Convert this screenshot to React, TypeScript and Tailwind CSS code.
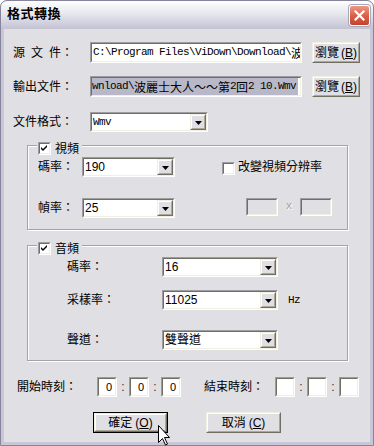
import React from "react";

const FONT = "font-['Liberation_Sans','Noto_Sans_CJK_TC',sans-serif]";

function Sunken({
  className = "",
  inner = "bg-white",
  children,
}: {
  className?: string;
  inner?: string;
  children?: React.ReactNode;
}) {
  return (
    <div className={`border border-t-[#9d9da1] border-l-[#9d9da1] border-r-white border-b-white ${className}`}>
      <div
        className={`h-full w-full border border-t-[#716f64] border-l-[#716f64] border-r-[#f1efe2] border-b-[#f1efe2] overflow-hidden flex items-center ${inner}`}
      >
        {children}
      </div>
    </div>
  );
}

function DropBtn() {
  return (
    <div className="h-full w-[16px] shrink-0 border border-t-[#f1efe2] border-l-[#f1efe2] border-r-[#716f64] border-b-[#716f64]">
      <div className="h-full w-full border border-t-white border-l-white border-r-[#aca899] border-b-[#aca899] bg-[#e0dfe3] flex items-center justify-center">
        <svg width="7" height="4" viewBox="0 0 7 4" className="mt-[1px]">
          <path d="M0 0H7L3.5 4Z" fill="black" />
        </svg>
      </div>
    </div>
  );
}

function Select({ className, value }: { className: string; value: string }) {
  return (
    <Sunken className={className}>
      <span className="flex-1 pl-[1px] text-[12px] leading-none whitespace-nowrap">{value}</span>
      <DropBtn />
    </Sunken>
  );
}

function Btn({
  className,
  children,
  def = false,
}: {
  className: string;
  children: React.ReactNode;
  def?: boolean;
}) {
  const raised = (
    <div className="h-full w-full border border-t-[#f1efe2] border-l-[#f1efe2] border-r-[#716f64] border-b-[#716f64]">
      <div className="h-full w-full border border-t-white border-l-white border-r-[#aca899] border-b-[#aca899] bg-[#e0dfe3] flex items-center justify-center text-[12px] leading-none whitespace-nowrap">
        {children}
      </div>
    </div>
  );
  if (def) {
    return <div className={`border border-black ${className}`}>{raised}</div>;
  }
  return <div className={className}>{raised}</div>;
}

function Check({ checked }: { checked: boolean }) {
  return (
    <Sunken className="w-[13px] h-[13px] shrink-0" inner="bg-white justify-center">
      {checked ? (
        <svg width="7" height="7" viewBox="0 0 7 7">
          <path d="M0 2L2 4L6 0V2L2 6L0 4Z" fill="black" />
        </svg>
      ) : null}
    </Sunken>
  );
}

function Mono({ text }: { text: string }) {
  return (
    <span className="flex items-center whitespace-pre leading-none">
      {[...text].map((c, i) =>
        c.charCodeAt(0) > 0x2e00 ? (
          <span key={i} className="inline-block w-[12px] text-[12px] font-['Noto_Sans_CJK_TC',sans-serif]">
            {c}
          </span>
        ) : (
          <span key={i} className="inline-block w-[6px] text-[11px] font-['Liberation_Mono',monospace]">
            {c}
          </span>
        )
      )}
    </span>
  );
}

function Legend({ label }: { label: string }) {
  return (
    <div className="absolute left-[9px] top-[-4px] flex items-center gap-[4px] bg-[#e0dfe3] pl-[1px] pr-[3px]">
      <Check checked={true} />
      <span className="text-[12px] leading-none">{label}</span>
    </div>
  );
}

function TimeBox({ v }: { v: string }) {
  return (
    <Sunken className="w-[20px] h-[20px] shrink-0" inner="bg-white justify-end pr-[3px]">
      <span className="text-[11px] leading-none">{v}</span>
    </Sunken>
  );
}

function Colon() {
  return <span className="w-[12px] text-center text-[12px] leading-none text-[#333]">:</span>;
}

export default function App() {
  return (
    <div className={`relative w-[374px] h-[446px] ${FONT} text-black`}>
      <div className="w-[374px] h-[446px] rounded-t-[7px] border border-[#85849a] bg-[#c8c7d8] flex flex-col overflow-hidden">
        {/* Title bar */}
        <div className="h-[28px] shrink-0 flex items-start justify-between rounded-t-[6px] bg-linear-to-b from-[#ffffff] via-[#e4e4ec] to-[#c3c2d3] pl-[6px] pr-[3px]">
          <span className="mt-[6px] text-[13px] font-bold leading-none tracking-[0.5px]">格式轉換</span>
          <div className="mt-[4px] w-[21px] h-[21px] rounded-[3px] border border-white bg-linear-to-b from-[#ea9a88] via-[#d8614b] to-[#c2432d] flex items-center justify-center shadow-[0_0_0_1px_#a9a8ba]">
            <svg width="11" height="11" viewBox="0 0 11 11">
              <path d="M1.5 1.5L9.5 9.5M9.5 1.5L1.5 9.5" stroke="white" strokeWidth="2.2" strokeLinecap="square" />
            </svg>
          </div>
        </div>

        {/* Body */}
        <div className="flex-1 mx-[3px] mb-[3px] bg-[#e0dfe3] flex flex-col pt-[13px]">
          {/* Row 1 */}
          <div className="flex items-center h-[21px]">
            <span className="pl-[9px] w-[86px] flex gap-[6px] text-[12px] leading-none">
              <span>源</span>
              <span>文</span>
              <span>件：</span>
            </span>
            <Sunken className="w-[212px] h-[21px] shrink-0" inner="bg-[#fffffb] pl-[1px]">
              <Mono text={"C:\\Program Files\\ViDown\\Download\\波"} />
            </Sunken>
            <Btn className="ml-[10px] w-[48px] h-[21px]">
              瀏覽<span className="ml-[2px]">(<span className="underline">B</span>)</span>
            </Btn>
          </div>

          {/* Row 2 */}
          <div className="flex items-center h-[21px] mt-[13px]">
            <span className="pl-[9px] w-[86px] text-[12px] leading-none">輸出文件：</span>
            <Sunken className="w-[212px] h-[21px] shrink-0" inner="bg-[#fffffb]">
              <span className="h-full flex items-center bg-[#b9b8c9] pr-[2px]">
                <Mono text={"wnload\\波麗士大人～～第2回2 10.Wmv"} />
              </span>
            </Sunken>
            <Btn className="ml-[10px] w-[48px] h-[21px]">
              瀏覽<span className="ml-[2px]">(<span className="underline">B</span>)</span>
            </Btn>
          </div>

          {/* Row 3 */}
          <div className="flex items-center h-[20px] mt-[15px]">
            <span className="pl-[9px] w-[86px] text-[12px] leading-none">文件格式：</span>
            <Sunken className="w-[118px] h-[20px]">
              <span className="flex-1 pl-[1px]">
                <Mono text="Wmv" />
              </span>
              <DropBtn />
            </Sunken>
          </div>

          {/* Video group */}
          <div className="relative mt-[13px] ml-[23px] w-[321px] h-[85px] shrink-0 border border-[#a3a3a8] shadow-[inset_1px_1px_0_#fff,1px_1px_0_#fff] pt-[11px] pl-[10px]">
            <Legend label="視頻" />
            <div className="flex items-center h-[20px]">
              <span className="w-[44px] text-[12px] leading-none">碼率：</span>
              <Select className="w-[93px] h-[20px]" value="190" />
              <div className="ml-[47px] mt-[3px]">
                <Check checked={false} />
              </div>
              <span className="ml-[3px] text-[12px] leading-none">改變視頻分辨率</span>
            </div>
            <div className="flex items-center h-[20px] mt-[21px]">
              <span className="w-[44px] text-[12px] leading-none">幀率：</span>
              <Select className="w-[93px] h-[20px]" value="25" />
              <Sunken className="ml-[71px] mb-[3px] w-[32px] h-[18px]" inner="bg-[#e0dfe3]" />
              <span className="w-[22px] mb-[3px] text-center text-[11px] leading-none text-[#a2a2a6] [text-shadow:1px_1px_0_#fff] font-['Liberation_Mono',monospace]">
                x
              </span>
              <Sunken className="mb-[3px] w-[32px] h-[18px]" inner="bg-[#e0dfe3]" />
            </div>
          </div>

          {/* Audio group */}
          <div className="relative mt-[15px] ml-[23px] w-[321px] h-[116px] shrink-0 border border-[#a3a3a8] shadow-[inset_1px_1px_0_#fff,1px_1px_0_#fff] pt-[11px] pl-[39px]">
            <Legend label="音頻" />
            <div className="flex items-center h-[20px]">
              <span className="w-[95px] text-[12px] leading-none">碼率：</span>
              <Select className="w-[116px] h-[20px]" value="16" />
            </div>
            <div className="flex items-center h-[20px] mt-[13px]">
              <span className="w-[95px] text-[12px] leading-none">采樣率：</span>
              <Select className="w-[116px] h-[20px]" value="11025" />
              <span className="ml-[10px]">
                <Mono text="Hz" />
              </span>
            </div>
            <div className="flex items-center h-[20px] mt-[20px]">
              <span className="w-[95px] text-[12px] leading-none">聲道：</span>
              <Select className="w-[116px] h-[20px]" value="雙聲道" />
            </div>
          </div>

          {/* Time row */}
          <div className="flex items-center h-[20px] mt-[16px] pl-[13px]">
            <span className="w-[80px] text-[12px] leading-none">開始時刻：</span>
            <TimeBox v="0" />
            <Colon />
            <TimeBox v="0" />
            <Colon />
            <TimeBox v="0" />
            <span className="ml-[23px] w-[71px] text-[12px] leading-none">結束時刻：</span>
            <TimeBox v="" />
            <Colon />
            <TimeBox v="" />
            <Colon />
            <TimeBox v="" />
          </div>

          {/* Buttons */}
          <div className="flex items-center mt-[15px] pl-[89px]">
            <Btn className="w-[75px] h-[21px]" def={true}>
              確定<span className="ml-[3px]">(<span className="underline">O</span>)</span>
            </Btn>
            <Btn className="ml-[38px] w-[75px] h-[21px]">
              取消<span className="ml-[3px]">(<span className="underline">C</span>)</span>
            </Btn>
          </div>
        </div>
      </div>

      {/* Mouse cursor */}
      <svg className="absolute left-[157px] top-[424px]" width="13" height="22" viewBox="0 0 13 22">
        <path
          d="M1.5 1.5V18.5L5.5 14.5L8.5 21L10.5 20L7.5 13.5H12.5Z"
          fill="white"
          stroke="black"
          strokeWidth="1"
          strokeLinejoin="miter"
        />
      </svg>
    </div>
  );
}
